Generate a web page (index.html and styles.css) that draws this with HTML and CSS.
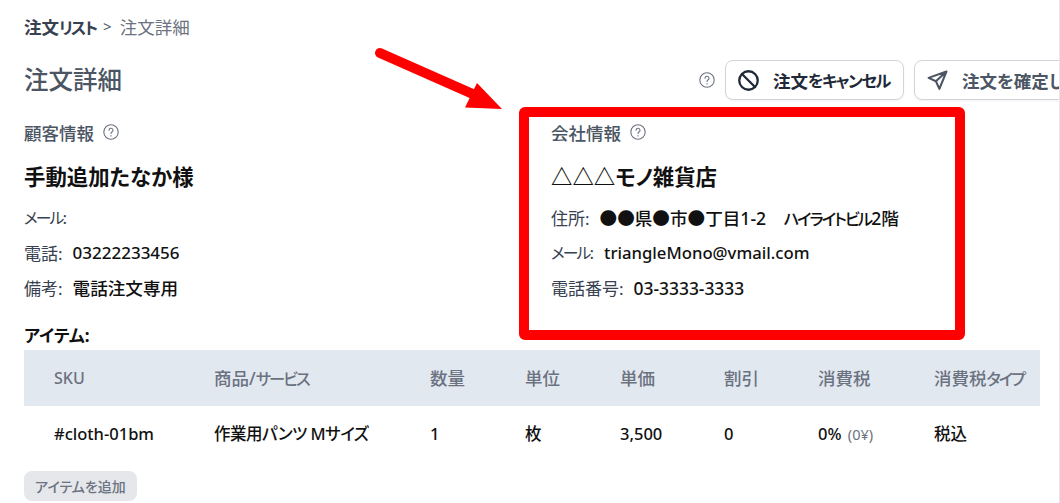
FILE: index.html
```html
<!DOCTYPE html>
<html lang="ja">
<head>
<meta charset="utf-8">
<title>注文詳細</title>
<link rel="stylesheet" href="styles.css">
</head>
<body>
<div class="page">
  <nav class="crumbs"><span class="crumb-link">注文<span class="kana">リスト</span></span><span class="crumb-sep">&gt;</span><span class="crumb-current">注文詳細</span></nav>
  <header class="head">
    <h1 class="title">注文詳細</h1>
    <div class="actions">
      <svg class="help help-action" viewBox="0 0 16 16"><circle cx="8" cy="8" r="7.2"/><path d="M6 6.2a2 2 0 1 1 2.9 1.8c-.6.3-.9.7-.9 1.4"/><path d="M8 11.6v.3"/></svg>
      <button class="btn btn-cancel"><svg class="btn-icon" viewBox="0 0 20 20"><circle cx="10" cy="10" r="8.8"/><path d="M3.8 3.8l12.4 12.4"/></svg>注文<span class="kana">をキャンセル</span></button>
      <button class="btn btn-confirm"><svg class="btn-icon" viewBox="0 0 20 20"><path d="M18.5 1.5 1.5 7.5l7 3.2 3.3 7.3zM18.5 1.5 8.5 10.7"/></svg>注文を確定します</button>
    </div>
  </header>
  <div class="info">
    <section class="col">
      <h2 class="sec">顧客情報<svg class="help" viewBox="0 0 16 16"><circle cx="8" cy="8" r="7.2"/><path d="M6 6.2a2 2 0 1 1 2.9 1.8c-.6.3-.9.7-.9 1.4"/><path d="M8 11.6v.3"/></svg></h2>
      <p class="name">手動追加たなか様</p>
      <p class="row"><span class="lbl"><span class="kana">メール</span>:</span></p>
      <p class="row"><span class="lbl">電話:</span><b>03222233456</b></p>
      <p class="row"><span class="lbl">備考:</span><b class="wide">電話注文専用</b></p>
    </section>
    <section class="col">
      <h2 class="sec">会社情報<svg class="help" viewBox="0 0 16 16"><circle cx="8" cy="8" r="7.2"/><path d="M6 6.2a2 2 0 1 1 2.9 1.8c-.6.3-.9.7-.9 1.4"/><path d="M8 11.6v.3"/></svg></h2>
      <p class="name">△△△モノ雑貨店</p>
      <p class="row"><span class="lbl">住所:</span><b class="wide">●●県●市●丁目1-2　<span class="kana">ハイライトビル</span>2階</b></p>
      <p class="row"><span class="lbl"><span class="kana">メール</span>:</span><b class="mail">triangleMono@vmail.com</b></p>
      <p class="row"><span class="lbl">電話番号:</span><b class="phone">03-3333-3333</b></p>
    </section>
  </div>
  <h3 class="items">アイテム:</h3>
  <table class="tbl">
    <thead><tr><th class="c1"><span class="latin">SKU</span></th><th class="c2">商品/<span class="kana">サービス</span></th><th class="c3">数量</th><th class="c4">単位</th><th class="c5">単価</th><th class="c6">割引</th><th class="c7">消費税</th><th class="c8">消費税<span class="kana">タイプ</span></th></tr></thead>
    <tbody><tr><td>#cloth-01bm</td><td class="tight">作業用パンツ Mサイズ</td><td>1</td><td>枚</td><td>3,500</td><td>0</td><td>0% <small>(0¥)</small></td><td>税込</td></tr></tbody>
  </table>
  <button class="add">アイテムを追加</button>
  <div class="mark-box"></div>
  <svg class="mark-arrow" viewBox="0 0 160 70"><path d="M10 8 105 50" fill="none" stroke="#f00" stroke-width="10" stroke-linecap="round"/><path d="M107 38 132 64 95 62.5Z" fill="#f00"/></svg>
</div>
</body>
</html>
```
FILE: styles.css
```css
* { box-sizing: border-box; }
html, body { margin: 0; height: 503px; overflow: hidden; background: #fff; }
body { font-family: "Noto Sans", "Noto Sans CJK JP", sans-serif; color: #111827; font-feature-settings: "palt"; }
.page { position: relative; height: 503px; padding: 15px 0 0 24px; overflow: hidden; border-right: 1px solid #e5e7eb; }
.kana { font-size: .93em; letter-spacing: -.12em; }
.latin { font-size: 16px; }
.crumbs { display: flex; align-items: center; height: 22px; font-size: 17.5px; }
.crumb-link { font-weight: 700; color: #374151; }
.crumb-sep { margin: 0 8px 0 7px; color: #4b5563; font-size: 15px; }
.crumb-current { color: #6b7280; }
.head { display: flex; align-items: center; height: 42px; margin-top: 22px; }
.title { margin: 0; font-size: 24.5px; line-height: 32px; font-weight: 500; color: #4b5563; }
.actions { position: absolute; left: 699px; top: 60px; display: flex; align-items: center; gap: 10px; }
.help { width: 16px; height: 16px; fill: none; stroke: #6b7280; stroke-width: 1.1; stroke-linecap: round; margin-left: 9px; flex: none; }
.help-action { margin: 0; }
.btn { display: flex; align-items: center; height: 40px; padding: 0 12px; border: 1px solid #d1d5db; border-radius: 8px; background: #fff; box-shadow: 0 1px 2px rgba(0, 0, 0, .05); font: 700 17.5px "Noto Sans", "Noto Sans CJK JP", sans-serif; font-feature-settings: "palt"; white-space: nowrap; }
.btn .kana { letter-spacing: -.09em; }
.btn-cancel { color: #1f2937; width: 179px; }
.btn-confirm { color: #4b5563; }
.btn-icon { width: 21px; height: 21px; margin-right: 14px; fill: none; stroke: #1f2937; stroke-width: 2.2; stroke-linejoin: round; stroke-linecap: round; flex: none; }
.btn-confirm .btn-icon { stroke: #4b5563; stroke-width: 2; }
.info { display: grid; grid-template-columns: 527px 1fr; margin-top: 20px; }
.sec { display: flex; align-items: center; margin: 0; height: 22px; font-size: 17.5px; font-weight: 500; color: #4b5563; }
.name { margin: 20px 0 0; font-size: 21.4px; line-height: 28px; font-weight: 700; color: #111; }
.row { display: flex; gap: 10px; margin: 0; height: 35px; align-items: center; font-size: 17px; color: #374151; }
.name + .row { margin-top: 9px; }
.row b { font-weight: 500; color: #111; }
.row .mail { font-size: 16.7px; }
.row .wide { font-size: 17.6px; }
.row .phone { font-size: 17.4px; }
.lbl { color: #374151; }
.items { margin: 20px 0 0; height: 22px; line-height: 22px; font-size: 17px; font-weight: 700; color: #111; }
.tbl { width: 1016px; margin-top: 3px; border-collapse: collapse; table-layout: fixed; font-size: 17.5px; }
.tbl th { height: 56px; padding: 0 0 2px; background: #e2e8f0; text-align: left; font-weight: 500; color: #6b7280; }
.tbl td { height: 56px; padding: 0 0 2px; font-size: 16.5px; font-weight: 500; color: #111; }
.tbl .tight { letter-spacing: -.03em; }
.tbl th:first-child, .tbl td:first-child { padding-left: 30px; }
.c1 { width: 190px; } .c2 { width: 216px; } .c3 { width: 95px; } .c4 { width: 95px; } .c5 { width: 104px; } .c6 { width: 94px; } .c7 { width: 116px; }
.tbl small { margin-left: 2px; font-size: 14.5px; font-weight: 400; color: #6b7280; }
.add { display: block; margin-top: 9px; height: 30px; width: 113px; padding: 0; border: 0; border-radius: 8px; background: #e5e7eb; color: #6b7280; font: 500 14px "Noto Sans", "Noto Sans CJK JP", sans-serif; font-feature-settings: "palt"; }
.mark-box { position: absolute; left: 519px; top: 107px; width: 446px; height: 233px; border: 10px solid #f00; border-radius: 6px; }
.mark-arrow { position: absolute; left: 370px; top: 45px; width: 160px; height: 70px; }
```
